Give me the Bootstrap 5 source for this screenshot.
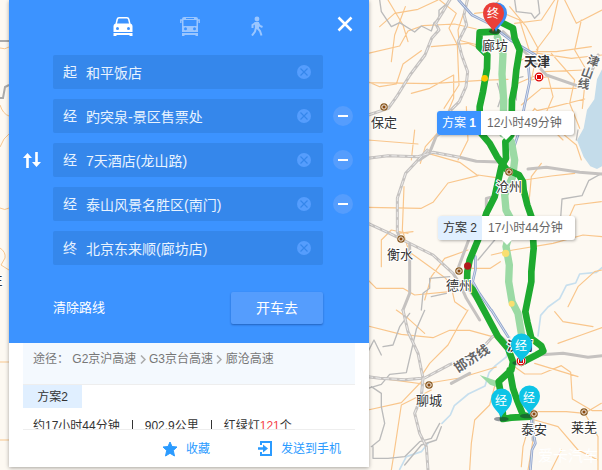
<!DOCTYPE html>
<html lang="zh-CN">
<head>
<meta charset="utf-8">
<meta name="viewport" content="width=device-width, initial-scale=1">
<title>路线规划</title>
<link href="https://cdn.jsdelivr.net/npm/bootstrap@5.3.0/dist/css/bootstrap.min.css" rel="stylesheet">
<style>
body{font-family:"Liberation Sans","Noto Sans CJK SC",sans-serif;font-size:12px;line-height:18px;color:#333;background:#fdf9f2}
.map-canvas{inset:0;z-index:0}
.map-canvas svg{display:block}
.planner{width:360px;z-index:1;height:calc(100vh - 3px);margin-left:9px;box-shadow:0 1px 4px rgba(0,0,0,.35)}
.route-form{background:#3c93ff;padding:13px 14px 19px 12px}
.modes{padding-left:89px;margin-bottom:16px;height:26px}
.icon-btn{background:none;border:0;padding:0;line-height:0;color:#fff}
.modes .icon-btn{width:26px;height:26px;margin-right:41px}
.modes .faded{color:#9ac6ff}
.modes .close-btn{width:20px;margin:0;margin-top:-2px}
.stops{gap:10px}
.swap-col{width:24px;padding-left:2px}
.stop-row{height:34px;gap:10px}
.stop-field{background:#3587eb;border-radius:2px;padding:0 12px 0 10px;font-size:14px;color:#e8f3ff;width:270px}
.stop-field label{width:23px}
.stop-field input{background:none;border:0;outline:0;color:#e8f3ff;padding:0;min-width:0;height:34px}
.clear-all{color:#fff;font-size:13px}
.go-btn{width:92px;height:32px;background:#559dfd;color:#fff;font-size:14px;border-radius:2px;border:0;padding:0;box-shadow:0 1px 2px rgba(0,40,110,.45)}
.form-foot{padding:27px 32px 0 32px}
.results{margin:0 14px;min-height:0;border-bottom:1px solid #eee}
.via{background:#f4f9fe;border-bottom:1px solid #eee;height:42px;padding:7px 10px;color:#777}
.plan-tab{background:#e0efff;width:59px;height:23px;padding:3px 0;border:0;color:#333}
.plan-sum{padding:9px 10px;white-space:nowrap}
.plan-sum .bar{width:1px;height:12px;background:#333;margin:3px 12px 0}
.red-num{color:#f54349}
.tools{height:37px}
.tools a{color:#2b9bff;text-decoration:none}
.plan-tip{z-index:0;height:24px;background:#fff;border-radius:3px;box-shadow:1px 1px 3px rgba(0,0,0,.3);color:#666;white-space:nowrap;width:137px}
.plan-tip .plan-name{width:44px;height:24px;line-height:24px;text-align:center;border-radius:3px 0 0 3px}
.plan-tip .plan-time{line-height:24px;padding-left:6px}
.tip-one{left:437px;top:111px}
.tip-two{left:438px;top:216px}
.tip-one .plan-name{background:#3c93ff;color:#fff}
.tip-two .plan-name{background:#e0efff;color:#333}
.plan-tip::after{content:"";position:absolute;left:64px;top:24px;border:5px solid transparent;border-top-color:#fff}
.city{font-size:13px;fill:#333;stroke:#fff;stroke-width:2px;paint-order:stroke;text-anchor:middle}
.rail-name{font-size:12px;fill:#666;stroke:#fff;stroke-width:2px;paint-order:stroke;font-weight:bold}
.rail-long{font-size:13px}
.pin-text{font-size:12px;fill:#fff;text-anchor:middle}
</style>
<script src="https://cdn.jsdelivr.net/npm/bootstrap@5.3.0/dist/js/bootstrap.bundle.min.js"></script>
</head>
<body class="position-relative vh-100 overflow-hidden">

<div class="map-canvas position-absolute">
<svg width="100%" height="100%" viewBox="0 0 602 470" preserveAspectRatio="xMinYMin slice" role="img" aria-label="地图">
  <defs>
    <g id="town"><circle r="4.2" fill="#fff" opacity=".7"/><circle r="3.2" fill="#fff" stroke="#8a5a20" stroke-width="1.2"/><rect x="-1.5" y="-1.5" width="3" height="3" fill="#8a4a10"/></g>
    <g id="capital"><circle r="5" fill="#fff"/><circle r="3.8" fill="#fff" stroke="#d00" stroke-width="1.3"/><rect x="-2" y="-2" width="4" height="4" fill="#d00"/></g>
    <path id="pin" d="M0 0C-1-6-10-10-10-19A10.500 10.500 0 1 1 11-19C11-10 2-6 0 0Z"/>
  </defs>
  <rect width="602" height="470" fill="#fdf9f2"/>
  <!-- strip left of the panel -->
  <g fill="none" stroke="#f8c78e" stroke-width="1">
    <path d="M0 48q5 2 9-1M0 105q3 9 9 11M0 147l4-8 5-5M0 208q5 3 9 0M0 248q6 4 5 10l-4 7 8 5M0 362h9M0 440h9"/>
    <path stroke="#aaa" stroke-width="2" d="M0 41h9M0 98h3l2-11 4-2"/>
  </g>
  <text class="city" x="-4" y="284">往</text>
  <g transform="translate(368 0) scale(.33333)" fill="none" stroke-linejoin="round" stroke-linecap="round">
    <!-- sea and rivers -->
    <path fill="#c4dcea" d="M702 208l-15 30-8 60-22 32-10 55-20 36 20 50 20 28 20 8 15-8Z"/>
    <g stroke="#c7dfee" stroke-width="5">
      <path d="M222 1270l25-25 12-28 42-35 50-24 12-40 20-22 32-25 10-60M510 1008l8-62 22-25 35-25 20-40 28-7 12-27 50-5 17-14M180 1330l-20 25-45 15-20 38"/>
    </g>
    <!-- small roads -->
    <g stroke="#f9c68c" stroke-width="3.500">
      <path d="M0 160l95-22 25-45 45-16 95-5 65 15M35 80l45-40 70-12 60-28M60 0l45 75 15 50M0 248l190 3 150-10 80-3M190 140l110-10 60 25M215 0l50 40-22 45 25 50 5 120-45 70M0 245l35 15 50-8 20-60 55-40M130 280l55-15 72-40 0 70-40 95-45 50-15 50M270 120l60 15M300 0l-30 90 5 60M320 40l45-5 28-35M395 35l60 25 30 95 80 0 105-15M425 20l50 60 35 65-20 95 50-10 15 60-30 70 60 60M440 70l80-10 40-60M570 0l-20 90-45 60M590 0l35 70 77-40M550 160l70 80-15 70 30 75M640 60l-20 90 35 60-12 115M460 180l50-20 100 15 92-10M450 250l80-35 120-5M460 315l60-50 110 0M470 340l80-18 100-25M455 390l45-65 65 60 60 50 15 45M270 480l30-60-5-100M130 480l10-90M0 420l150 12"/>
      <path d="M70 185l10-80 32-85M0 622l160 3 35-18 45-58 90-22-55-40-95-27M330 525l70 10M108 560l-5 130 20 65 110 80 30 40M240 690h120M370 765l65-15 120-20 90-25 57 5M312 805l55 0 30-20M170 900l20-70 40-55 70-25M470 540l80-12 70-8M500 660h100l20-45 80-10M0 840l25 25 80 0 35 20 105-10M245 840l15 65 35 25M90 700l45-5M40 800l0-80 30-30 50 10M520 490l-30 40-10 110M600 920l30-60 50-45 22-5"/>
      <path d="M0 978l100 25 95 10 50-22 60 0 90 25 60 15M85 930l35 25 50 45M0 1130l90 12 75 10 110-18 110-33M165 1120l20-30 55-55 30-55 30-50M0 1230l100-22 65-68M190 1170l-90 45-22 145-8 50M305 1410l5-80 10-70 45-45 20-75M440 1100l30 22 50 0 60-25 28 20 5 80 60 35 70 0M500 1090l130 40M510 1235l85 0 55 5 50-30M500 1260l70 20 60 70 60 30M480 1410l15-90M550 1410l30-60M560 935l25 30 90 15M460 1400l5-60 20-70M570 1030l70-25 62-22M650 1240l40 70 0 100"/>
    </g>
    <g stroke="#bbb" stroke-width="4">
      <path d="M35 0l5 35 30 45 25-12 45 28 20-18 30 15 8-25 15-12 0-25 35-30M0 1165l40-12 25-30 50-5 30-130 25-57M45 1040l30-5 20-55 30-40M440 0l5 35 45 5 10 15 15-15-5-40M190 890l45-10M160 930l5-50 20-15 0-30 60-5M702 520l-40 22-20 45-60 10-5 70M330 780l50-60 20-20M390 320l10-30-12-40M445 300l0-65 20-5M625 420l5-30M0 1055l18-35 22 45M10 1160l30 20 0 40 10 50-15 50-25 20M215 1270l-25 45-35 10-45 45-50 5-45 0 0-35M220 1280l-15 40-45 15-50 60"/>
    </g>
    <!-- trunk roads and railways -->
    <g stroke="#c5c2c0" stroke-width="9">
      <path d="M245 0l-20 35-22 35 10 20-22 25-20 50-45 60-40 65-25 35-60 20M298 0l-10 45 8 30-25 50 10 40 18 50-5 45-20 45-30 30-10 50-30 25-20 50-30 20"/>
      <path d="M0 475l60-8 90 3 45-13 80 15 50 12 70 2M178 450l-65 70-25 75 0 100 10 25M0 670l65 30 70 35 60 30 60 55 20 30 20 45 40 65M125 730v150l-20 50M480 507l55-5 100 15 65 5M272 800l30-80 0-60M355 640v-45l20-5"/>
      <path d="M105 930l15 65 30 65 15 75-5 55-20 50 15 60 20 40 5 70M0 1130l35 5 75 4 60-5 75-40 80-30 50-55M295 860l35 45 50 90 60 50M510 1065l75-5 75 12 42-5M495 1230v90M250 1150l55-30"/>
      <path d="M405 95l75 70 55 60 100 35 25-15 30-80"/>
    </g>
    <g stroke="#fff" stroke-width="2" stroke-dasharray="14 10">
      <path d="M245 0l-20 35-22 35 10 20-22 25-20 50-45 60-40 65-25 35-60 20M298 0l-10 45 8 30-25 50 10 40 18 50-5 45-20 45-30 30M0 475l60-8 90 3 45-13 80 15M178 450l-65 70-25 75 0 100M0 670l65 30 70 35 60 30 60 55M105 930l15 65 30 65 15 75-5 55-20 50 15 60 20 40 5 70M0 1130l35 5 75 4 60-5 75-40 80-30 50-55"/>
    </g>
    <g stroke="#8fa4cd" stroke-width="8">
      <path d="M272 0l40 45 50 25 65 50 75 45M480 185l5 60-15 70-15 75-15 45M322 770l0 40-8 35 20 35 35 50M370 930l50 80M490 1260l12 70-10 20-5 60"/>
      <path stroke="#fff" stroke-width="2" d="M272 0l40 45 50 25 65 50 75 45M480 185l5 60-15 70-15 75-15 45M322 770l0 40-8 35 20 35 35 50M370 930l50 80M490 1260l12 70-10 20-5 60"/>
    </g>
    <!-- alternative route -->
    <g stroke="#9bdaa4" stroke-width="22">
      <path d="M388 112l17 50-3 60 5 80-2 100M430 425l10 55-6 50-24 55 4 45 16 30-8 50-8 30 10 55-2 50 10 60 18 35 10 60"/>
      <path fill="#9bdaa4" stroke="none" d="M335 1125l58 20-5 17-22-8Z"/>
    </g>
    <!-- main route -->
    <g stroke="#1eaa2f" stroke-width="20">
      <path d="M385 95l-50 2-2 43 25 25-1 40-12 70-10 45v75l30 35 22 40 28 38 38 17 12 20 2 25 11 45 14 40 5 90-7 70v30l-12 60-6 30 6 30 12 50 30 23 6 15-21 12-45 23"/>
      <path d="M405 70l30 15 5 30 15 35-10 60-5 50-8 40-2 105-18 20 2 50-14 25-20 90-25 50-25 80-25 60-7 35-1 35 18 20 35 65 40 75 30 35 15 40-5 25-38 35 8 45 5 55M425 1110l10 55 12 35 18 45 20 5-55 3-25 4"/>
    </g>
    <g stroke="none">
      <circle cx="350" cy="235" r="10" fill="#fdc800"/><circle cx="413" cy="760" r="11" fill="#f9df70"/><circle cx="431" cy="911" r="9" fill="#f9df70"/><circle cx="299" cy="798" r="11" fill="#b0191c"/>
      <ellipse cx="400" cy="1257" rx="22" ry="7" fill="#123" opacity=".45"/><ellipse cx="478" cy="1248" rx="22" ry="7" fill="#123" opacity=".45"/><ellipse cx="455" cy="1089" rx="22" ry="7" fill="#123" opacity=".45"/><ellipse cx="381" cy="94" rx="18" ry="8" fill="#222" opacity=".6"/>
    </g>
  </g>
  <use href="#town" x="384" y="107"/><use href="#town" x="509" y="172"/><use href="#town" x="401" y="239"/><use href="#town" x="459" y="271"/><use href="#town" x="429" y="385"/><use href="#town" x="534" y="414"/><use href="#town" x="584" y="412"/>
  <use href="#capital" x="539" y="77"/><use href="#capital" x="521" y="361"/>
  <text class="city" x="495" y="50">廊坊</text>
  <text class="city fw-bold" x="537" y="66">天津</text>
  <text class="city" x="384" y="127">保定</text>
  <text class="city" x="509" y="191">沧州</text>
  <text class="city" x="400" y="259">衡水</text>
  <text class="city" x="459" y="290">德州</text>
  <text class="city" x="429" y="405">聊城</text>
  <text class="city" x="534" y="434">泰安</text>
  <text class="city" x="584" y="432">莱芜</text>
  <text class="city fw-bold" x="520" y="350">济南</text>
  <g text-anchor="middle"><text class="rail-name" transform="translate(592 65) rotate(20)">津</text><text class="rail-name" transform="translate(586 77) rotate(20)">山</text><text class="rail-name" transform="translate(583 88) rotate(10)">线</text></g>
  <text class="rail-name rail-long" transform="translate(458 373) rotate(-33)">邯济线</text>
  <use href="#pin" x="496" y="32" fill="#3c8df5"/>
  <use href="#pin" x="493" y="32" fill="#ea3f38"/>
  <use href="#pin" x="521" y="363" fill="#0ec4e6"/>
  <use href="#pin" x="501" y="418" fill="#0ec4e6"/>
  <use href="#pin" x="529" y="415" fill="#0ec4e6"/>
  <text class="pin-text" x="493" y="18">终</text><text class="pin-text" x="521" y="350">经</text><text class="pin-text" x="501" y="405">经</text><text class="pin-text" x="529" y="402">经</text>
  <text x="538" y="461" font-size="15" fill="#fff">爱卡汽车</text>
</svg>
</div>

<div class="plan-tip tip-one position-absolute d-flex"><span class="plan-name">方案 <b>1</b></span><span class="plan-time">12小时49分钟</span></div>
<div class="plan-tip tip-two position-absolute d-flex"><span class="plan-name">方案 2</span><span class="plan-time">17小时44分钟</span></div>

<svg class="d-none" aria-hidden="true">
  <symbol id="clear" viewBox="0 0 14 14"><circle cx="7" cy="7" r="7" fill="#559dfd"/><path d="M3.500 3.500l7 7M10.500 3.500l-7 7" stroke="#3587eb" stroke-width="1.200"/></symbol>
  <symbol id="minus" viewBox="0 0 20 20"><circle cx="10" cy="10" r="10" fill="#559dfd"/><path d="M5 10h10" stroke="#fff" stroke-width="2"/></symbol>
</svg>

<main class="planner position-relative d-flex flex-column bg-white">
  <form class="route-form flex-shrink-0" onsubmit="return false">
    <div class="modes d-flex align-items-start">
      <button type="button" class="icon-btn" aria-label="驾车"><svg width="20" height="20" viewBox="0 0 20 20"><path fill="currentColor" fill-rule="evenodd" d="M6 1h8q2 0 2.500 2l1 4.500q2 .5 2 2.500v6H.5v-6q0-2 2-2.500l1-4.500Q4 1 6 1ZM6.300 2.500q-1 0-1.300 1l-1 4h12l-1-4q-.3-1-1.300-1Z"/><g fill="#3c93ff"><circle cx="4.500" cy="12.500" r="1.500"/><circle cx="15.500" cy="12.500" r="1.500"/></g><path fill="currentColor" d="M.5 17h19v3h-3v-1h-13v1h-3Z"/></svg></button>
      <button type="button" class="icon-btn faded" aria-label="公交"><svg width="20" height="20" viewBox="0 0 20 20"><path fill="currentColor" fill-rule="evenodd" d="M4 1h12q2 0 2 2v13H2V3q0-2 2-2ZM3.500 4v6h13V4Z"/><path d="M2 4H.8v3M18 4h1.200v3" fill="none" stroke="currentColor" stroke-width="1.400"/><path d="M6 2.500h8" stroke="#3c93ff"/><g fill="#3c93ff"><circle cx="5.500" cy="12.700" r="1.500"/><circle cx="14.500" cy="12.700" r="1.500"/></g><path fill="currentColor" d="M2 17h16v3h-2.500v-1h-11v1H2Z"/></svg></button>
      <button type="button" class="icon-btn faded" aria-label="步行"><svg width="14" height="20" viewBox="0 0 14 20"><circle cx="7" cy="3" r="2.400" fill="currentColor"/><path fill="currentColor" d="M4.500 6h4.500v6.500h-4Z"/><path d="M6 11.500l-1 4-3 4M7 11.500l3 3.500 1.500 4.500M5.500 7L2.500 9v3M8 7l2 3 2.500 1" fill="none" stroke="currentColor" stroke-width="2"/></svg></button>
      <button type="button" class="icon-btn close-btn ms-auto" aria-label="关闭"><svg width="16" height="16" viewBox="0 0 16 16"><path d="M1.500 1.500l13 13M14.500 1.500l-13 13" stroke="currentColor" stroke-width="2.500"/></svg></button>
    </div>
    <div class="d-flex">
      <div class="swap-col d-flex align-items-center flex-shrink-0 me-2">
        <button type="button" class="icon-btn" aria-label="交换起终点"><svg width="18" height="17" viewBox="0 0 18 17"><path d="M4.500 16V3M13.500 0v13" stroke="currentColor" stroke-width="2.600"/><path fill="currentColor" d="M0 6l4.500-5L9 6ZM9 10h9l-4.500 5Z"/></svg></button>
      </div>
      <div class="stops d-flex flex-column">
        <div class="stop-row d-flex align-items-center"><div class="stop-field d-flex align-items-center"><label for="s1">起</label><input class="flex-fill" id="s1" type="text" value="和平饭店"><button type="button" class="icon-btn" aria-label="清空"><svg width="14" height="14"><use href="#clear"/></svg></button></div></div>
        <div class="stop-row d-flex align-items-center"><div class="stop-field d-flex align-items-center"><label for="s2">经</label><input class="flex-fill" id="s2" type="text" value="趵突泉-景区售票处"><button type="button" class="icon-btn" aria-label="清空"><svg width="14" height="14"><use href="#clear"/></svg></button></div><button type="button" class="icon-btn" aria-label="删除"><svg width="20" height="20"><use href="#minus"/></svg></button></div>
        <div class="stop-row d-flex align-items-center"><div class="stop-field d-flex align-items-center"><label for="s3">经</label><input class="flex-fill" id="s3" type="text" value="7天酒店(龙山路)"><button type="button" class="icon-btn" aria-label="清空"><svg width="14" height="14"><use href="#clear"/></svg></button></div><button type="button" class="icon-btn" aria-label="删除"><svg width="20" height="20"><use href="#minus"/></svg></button></div>
        <div class="stop-row d-flex align-items-center"><div class="stop-field d-flex align-items-center"><label for="s4">经</label><input class="flex-fill" id="s4" type="text" value="泰山风景名胜区(南门)"><button type="button" class="icon-btn" aria-label="清空"><svg width="14" height="14"><use href="#clear"/></svg></button></div><button type="button" class="icon-btn" aria-label="删除"><svg width="20" height="20"><use href="#minus"/></svg></button></div>
        <div class="stop-row d-flex align-items-center"><div class="stop-field d-flex align-items-center"><label for="s5">终</label><input class="flex-fill" id="s5" type="text" value="北京东来顺(廊坊店)"><button type="button" class="icon-btn" aria-label="清空"><svg width="14" height="14"><use href="#clear"/></svg></button></div></div>
      </div>
    </div>
    <div class="form-foot d-flex align-items-center justify-content-between">
      <a href="#" class="clear-all text-decoration-none">清除路线</a>
      <button type="submit" class="go-btn">开车去</button>
    </div>
  </form>
  <section class="results flex-fill overflow-hidden">
    <div class="via">途径： G2京沪高速 <svg width="6" height="9" viewBox="0 0 6 9"><path d="M1 .5l4 4-4 4" fill="none" stroke="#aaa" stroke-width="1.500"/></svg> G3京台高速 <svg width="6" height="9" viewBox="0 0 6 9"><path d="M1 .5l4 4-4 4" fill="none" stroke="#aaa" stroke-width="1.500"/></svg> 廊沧高速</div>
    <button type="button" class="plan-tab d-block">方案2</button>
    <div class="plan-sum d-flex"><span>约17小时44分钟</span><span class="bar"></span><span>902.9公里</span><span class="bar"></span><span>红绿灯<span class="red-num">121</span>个</span></div>
  </section>
  <footer class="tools d-flex align-items-center justify-content-end flex-shrink-0">
    <a href="#" class="d-flex align-items-center gap-2 me-5"><svg width="16" height="16" viewBox="0 0 16 16"><path fill="#2b9bff" stroke="#2b9bff" stroke-linejoin="round" d="M8 1l2 4.500 5 .5-3.700 3.400L12.500 15 8 12.300 3.500 15l1.200-5.600L1 6l5-.5Z"/></svg>收藏</a>
    <a href="#" class="d-flex align-items-center gap-2 me-4 pe-1"><svg width="15" height="16" viewBox="0 0 15 16"><path d="M3 4V1h10v13H3v-3" fill="none" stroke="#2b9bff" stroke-width="2"/><path d="M3 13h10v2H3Z" fill="#2b9bff"/><path d="M0 7.500h6" stroke="#2b9bff" stroke-width="2.500"/><path fill="#2b9bff" d="M5 3.500l5 4-5 4Z"/></svg>发送到手机</a>
  </footer>
</main>
</body>
</html>
